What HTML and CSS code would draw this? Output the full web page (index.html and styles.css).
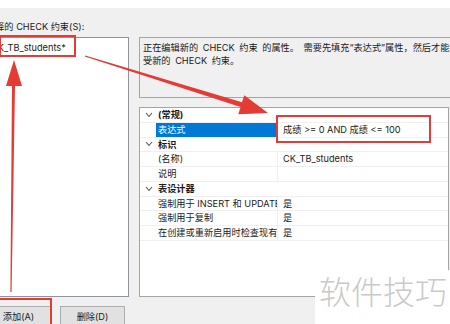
FILE: index.html
```html
<!DOCTYPE html>
<html>
  <head>
    <meta charset="utf-8">
    <link rel="stylesheet" href="styles.css">
  </head>
  <body>
    <div class="topbar"></div>
    <div class="label">选择的 CHECK 约束(S):</div>

    <div class="main">
      <div class="list">
        <div class="item">CK_TB_students*</div>
      </div>

      <div class="right">
        <div class="desc">
          <div class="line">正在编辑新的 CHECK 约束 的属性。 需要先填充“表达式”属性，然后才能接</div>
          <div class="line">受新的 CHECK 约束。</div>
        </div>

        <div class="grid">
          <div class="row cat">
            <span class="gutter"><svg width="8" height="6" viewBox="0 0 8 6"><polyline points="1,1 4,4.5 7,1" fill="none" stroke="#555" stroke-width="1.1"/></svg></span>
            <span class="name">(常规)</span><span class="value"></span>
          </div>
          <div class="row">
            <span class="gutter"></span>
            <span class="name selected">表达式</span><span class="value">成绩 &gt;= 0 AND 成绩 &lt;= 100</span>
          </div>
          <div class="row cat">
            <span class="gutter"><svg width="8" height="6" viewBox="0 0 8 6"><polyline points="1,1 4,4.5 7,1" fill="none" stroke="#555" stroke-width="1.1"/></svg></span>
            <span class="name">标识</span><span class="value"></span>
          </div>
          <div class="row">
            <span class="gutter"></span>
            <span class="name">(名称)</span><span class="value">CK_TB_students</span>
          </div>
          <div class="row">
            <span class="gutter"></span>
            <span class="name">说明</span><span class="value"></span>
          </div>
          <div class="row cat">
            <span class="gutter"><svg width="8" height="6" viewBox="0 0 8 6"><polyline points="1,1 4,4.5 7,1" fill="none" stroke="#555" stroke-width="1.1"/></svg></span>
            <span class="name">表设计器</span><span class="value"></span>
          </div>
          <div class="row">
            <span class="gutter"></span>
            <span class="name">强制用于 INSERT 和 UPDATE</span><span class="value">是</span>
          </div>
          <div class="row">
            <span class="gutter"></span>
            <span class="name">强制用于复制</span><span class="value">是</span>
          </div>
          <div class="row">
            <span class="gutter"></span>
            <span class="name">在创建或重新启用时检查现有数据</span><span class="value">是</span>
          </div>
        </div>
      </div>
    </div>

    <div class="buttons">
      <button class="btn">添加(A)</button>
      <button class="btn">删除(D)</button>
    </div>

    <!-- annotations drawn over the dialog -->
    <div class="mark mark-item"></div>
    <div class="mark mark-value"></div>
    <div class="mark mark-add"></div>

    <svg class="arrows" width="450" height="324" viewBox="0 0 450 324">
      <polygon fill="#e53b35" points="11.6,292 15,86 22,86 14,60 6,86 12,86 10.4,292"/>
      <polygon fill="#e53b35" points="85.2,55.5 242,102.3 244.3,95.2 268,113 238.3,114.2 240.6,107.1 84.8,56.5"/>
    </svg>

    <div class="watermark">软件技巧</div>
  </body>
</html>
```

FILE: styles.css
```css
* {box-sizing: border-box;}

body {
  margin: 0;
  width: 450px;
  height: 324px;
  overflow: hidden;
  position: relative;
  background-color: #f0f0f0;
  font-family: "Inter", "Noto Sans CJK SC", sans-serif;
  font-size: 9.2px;
  color: #1a1a1a;
}

.topbar {
  height: 8px;
  background-color: #fff;
}

.label {
  height: 29px;
  padding-top: 13px;
  line-height: 12px;
  margin-left: -14px;
  white-space: nowrap;
}

.main {
  display: flex;
  height: 260px;
}

.list {
  width: 130px;
  flex: none;
  margin-left: -1px;
  background-color: #fff;
  border: 1px solid #8f949b;
  padding-top: 2px;
  overflow: hidden;
}

.item {
  height: 16px;
  line-height: 16px;
  margin-left: -9px;
  white-space: nowrap;
}

.right {
  flex: 1;
  min-width: 0;
  margin-left: 10px;
  display: flex;
  flex-direction: column;
  gap: 9px;
}

.desc {
  height: 61px;
  border: 1px solid #a5a5a5;
  border-right: none;
  margin-right: -4px;
  padding: 3px 0 0 3px;
  line-height: 13px;
  word-spacing: 2px;
  overflow: hidden;
}

.line {white-space: nowrap;}

.grid {
  flex: 1;
  margin-right: 1px;
  background-color: #fff;
  border: 1px solid #a5a5a5;
  overflow: hidden;
}

.row {
  display: flex;
  height: 14.75px;
  line-height: 14px;
  border-bottom: 1px solid #f0f0f0;
  white-space: nowrap;
}

.gutter {
  width: 16px;
  flex: none;
  display: flex;
  align-items: center;
  justify-content: center;
  padding-left: 1px;
}

.name {
  width: 122px;
  flex: none;
  padding-left: 2px;
  overflow: hidden;
  border-right: 1px solid #f0f0f0;
}

.cat .name {
  font-weight: 700;
  border-right: none;
}

.name.selected {
  background-color: #0078d7;
  color: #fff;
}

.value {
  flex: 1;
  padding-left: 5px;
  overflow: hidden;
}

.buttons {
  display: flex;
  gap: 9px;
  margin-left: -14px;
  padding-top: 9px;
}

.btn {
  width: 65px;
  height: 22px;
  flex: none;
  padding: 0;
  background-color: #e1e1e1;
  border: 1px solid #adadad;
  font-family: "Inter", "Noto Sans CJK SC", sans-serif;
  font-size: 9.2px;
  line-height: 20px;
  color: #1a1a1a;
}

.mark {
  position: absolute;
  border: 2.5px solid #e53b35;
}

.mark-item {left: -1px; top: 35px; width: 77px; height: 22px;}
.mark-value {left: 276px; top: 115px; width: 155px; height: 28px;}
.mark-add {left: -4px; top: 298px; width: 56px; height: 40px;}

.arrows {
  position: absolute;
  left: 0;
  top: 0;
}

.watermark {
  position: absolute;
  left: 315px;
  top: 270px;
  width: 135px;
  height: 54px;
  background-color: #fff;
  padding-left: 4px;
  font-family: "Noto Sans CJK SC", sans-serif;
  font-weight: 300;
  font-size: 32px;
  line-height: 40px;
  color: #cacaca;
  white-space: nowrap;
}
```
